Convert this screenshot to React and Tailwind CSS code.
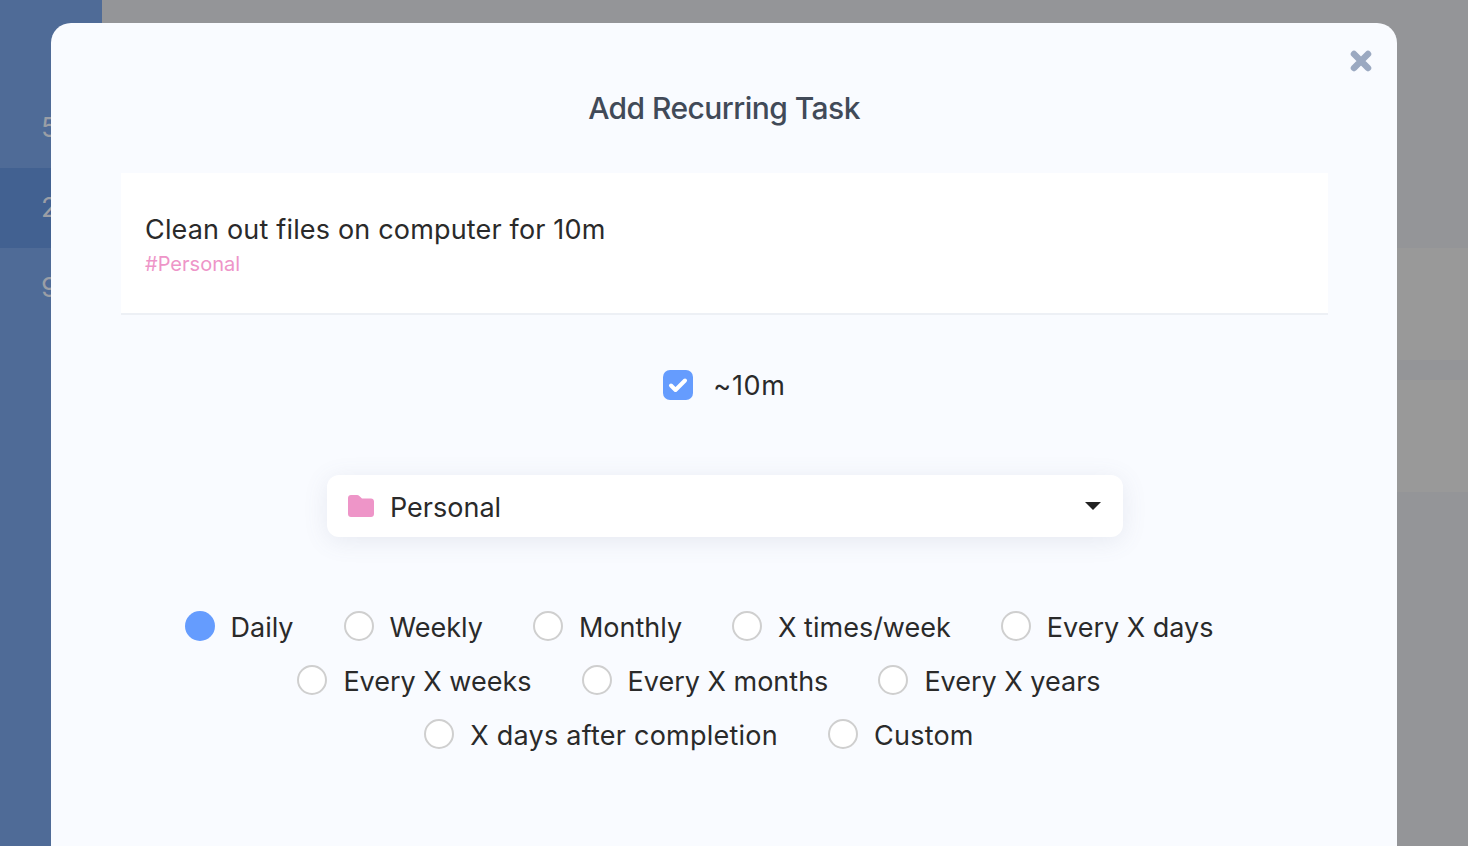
import { useState } from 'react';

const rows = [
  { labels: ['Daily', 'Weekly', 'Monthly', 'X times/week', 'Every X days'], cls: '' },
  { labels: ['Every X weeks', 'Every X months', 'Every X years'], cls: '' },
  { labels: ['X days after completion', 'Custom'], cls: 'tracking-[0.24px]' },
];

function Radio({ label, checked, onSelect }) {
  return (
    <label className="flex items-center gap-4 mr-[50px] cursor-pointer" onClick={onSelect}>
      {checked ? (
        <span className="w-[30px] h-[30px] rounded-full bg-[#659cfe]" />
      ) : (
        <span className="w-[30px] h-[30px] rounded-full bg-white border-2 border-[#cfcfcf]" />
      )}
      <span className="text-[27px] leading-[36px] text-[#2a2a2a] translate-y-[2px]">{label}</span>
    </label>
  );
}

export default function App() {
  const [repeat, setRepeat] = useState('Daily');

  return (
    <div className="relative h-[846px] overflow-hidden flex bg-[#949598] font-['Inter',sans-serif]">
      {/* page behind the modal */}
      <div className="w-[102px] bg-[#4f6b97] pt-[88px] text-[27px] text-[#9a9ea6]">
        <div className="h-20 pl-[41px] flex items-center">5</div>
        <div className="h-20 pl-[41px] flex items-center bg-[#426191]">2</div>
        <div className="h-20 pl-[41px] flex items-center">9</div>
      </div>
      <div className="flex-1 pt-[248px] flex flex-col gap-5">
        <div className="h-[112px] bg-[#999999]" />
        <div className="h-[112px] bg-[#999999]" />
      </div>

      {/* modal */}
      <div className="absolute left-[51px] top-[23px] w-[1346px] h-[900px] rounded-[20px] bg-[#f9fbff] px-[70px] pt-[66px]">
        <button className="absolute right-[24px] top-[26px] text-[#9ba9c1]">
          <svg width="24" height="24" viewBox="0 0 24 24" fill="none" stroke="currentColor" strokeWidth="6.5" strokeLinecap="round">
            <path d="M5 5 19 19M19 5 5 19" />
          </svg>
        </button>

        <h2 className="text-[30px] leading-[38px] font-medium text-center text-[#414a58] tracking-[-0.55px]">Add Recurring Task</h2>

        <div className="mt-[46px] h-[142px] w-[1207px] bg-white border-b-2 border-[#edf0f5] px-6 pt-[37px]">
          <div className="text-[27px] leading-[40px] text-[#2a2a2a] tracking-[0.17px]">Clean out files on computer for 10m</div>
          <div className="text-[20px] leading-[29px] text-[#ee95c8] tracking-[0.02px]">#Personal</div>
        </div>

        <div className="mt-[51px] flex items-center justify-center gap-5 pl-[1px]">
          <span className="w-[30px] h-[30px] mb-[2px] rounded-[7px] bg-[#659cfe] flex items-center justify-center">
            <svg width="20" height="16" viewBox="0 0 20 16" fill="none" stroke="white" strokeWidth="4" strokeLinecap="round" strokeLinejoin="round">
              <path d="M3 8.500 7.500 13 17 3.500" />
            </svg>
          </span>
          <span className="text-[27px] leading-[40px] text-[#2a2a2a] tracking-[0.7px]">~10m</span>
        </div>

        <div className="mt-[69px] mx-auto w-[796px] h-[62px] rounded-xl bg-white shadow-[0_4px_24px_rgba(100,110,140,0.12)] flex items-center pl-[21px] pr-[22px] translate-x-[1px]">
          <svg width="26" height="22" viewBox="0 0 26 22" fill="#ee95c8">
            <path d="M3 0h6c1 0 1.700.4 2.300 1L14 3.500h9c1.700 0 3 1.300 3 3V19c0 1.700-1.300 3-3 3H3c-1.700 0-3-1.300-3-3V3c0-1.700 1.300-3 3-3z" />
          </svg>
          <span className="ml-[16px] text-[27px] leading-[40px] pt-[4px] text-[#2a2a2a]">Personal</span>
          <span className="ml-auto w-0 h-0 border-x-[8px] border-x-transparent border-t-[8px] border-t-[#222222]" />
        </div>

        <div className="mt-[71px] flex flex-col items-center gap-[18px]">
          {rows.map((row, i) => (
            <div key={i} className={`flex items-center ${row.cls}`}>
              {row.labels.map((label) => (
                <Radio key={label} label={label} checked={repeat === label} onSelect={() => setRepeat(label)} />
              ))}
            </div>
          ))}
        </div>
      </div>
    </div>
  );
}
